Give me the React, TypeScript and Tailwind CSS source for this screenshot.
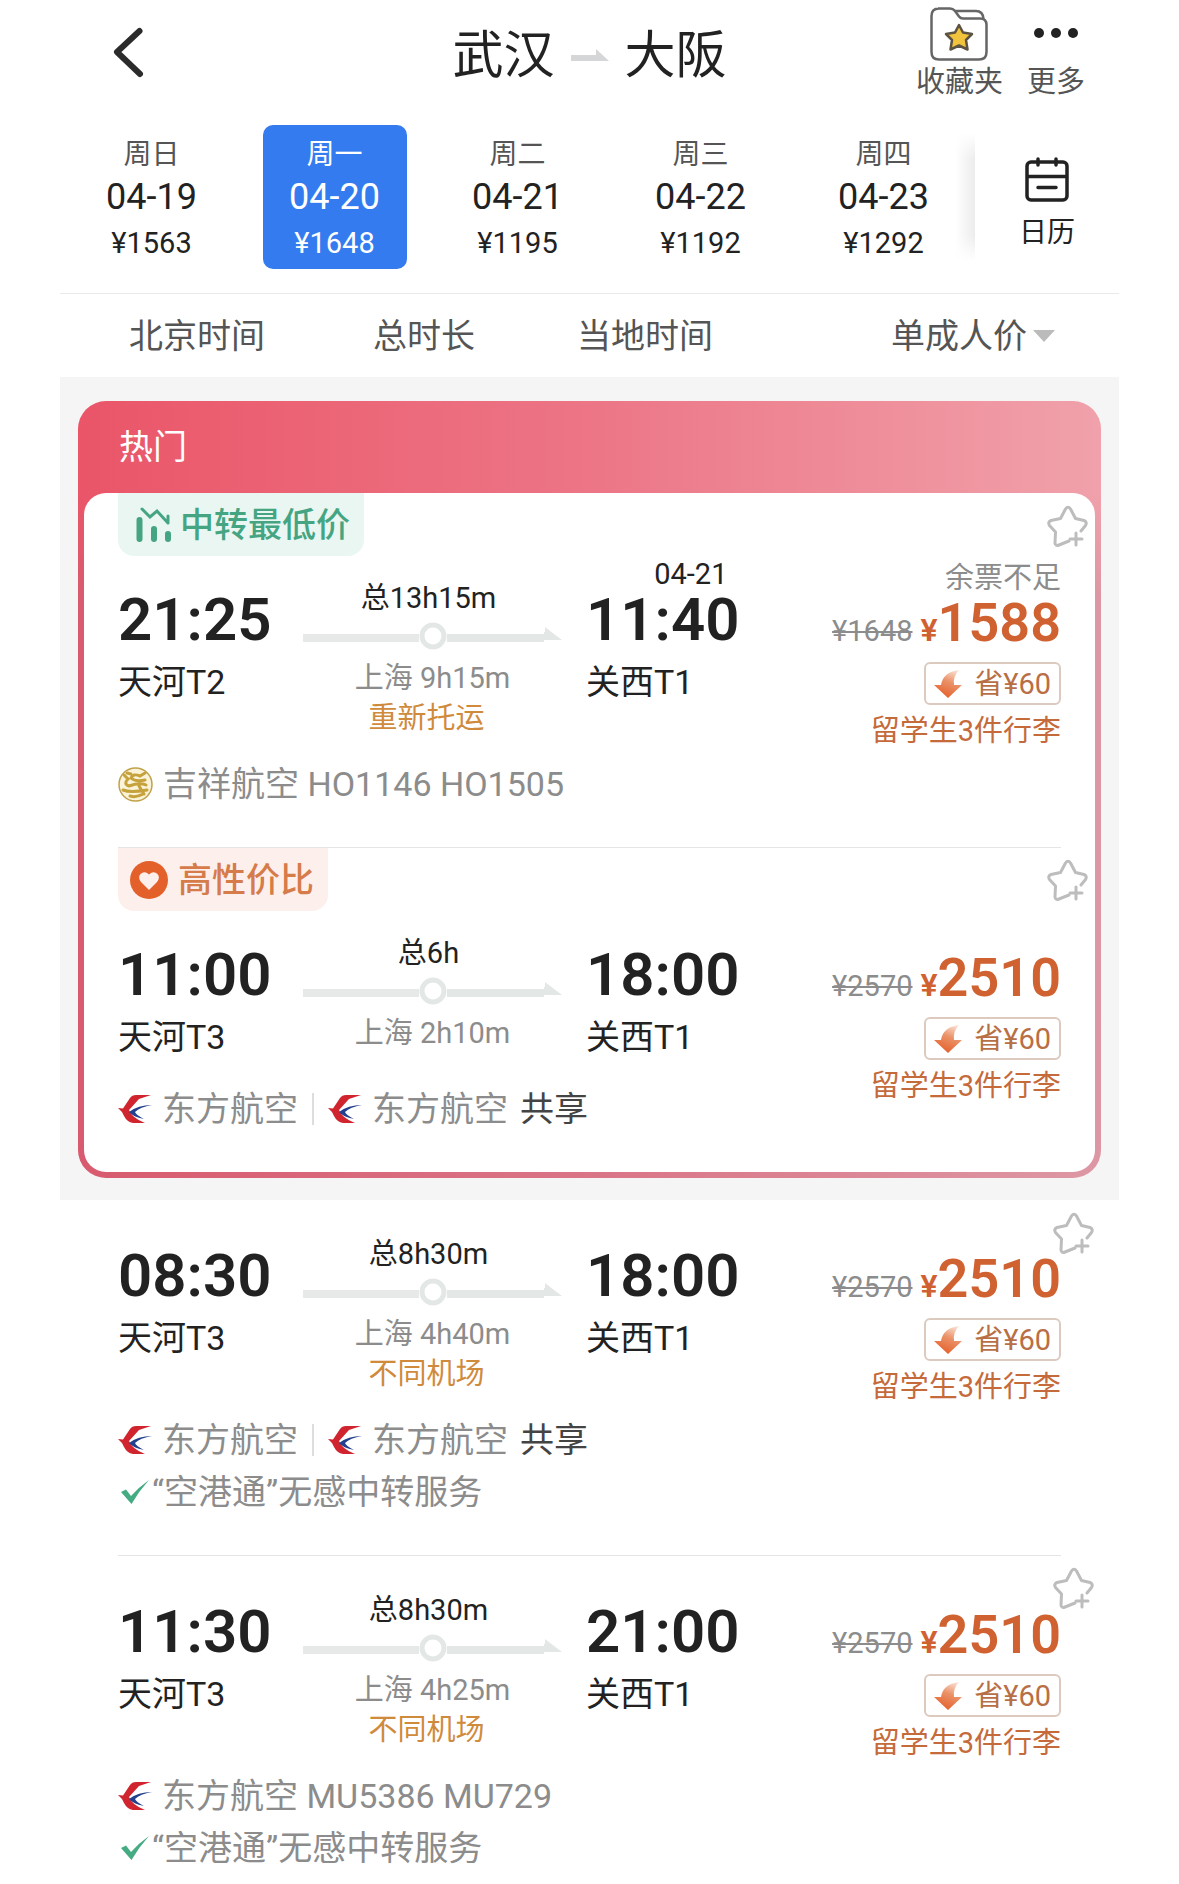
// Flight search results: date strip, sort bar, highlighted picks and the plain list.

import { useState } from "react";

type Leg = { airline: "juneyao" | "eastern"; name: string; shared?: boolean };

type Flight = {
  depart: string;
  from: string;
  arrive: string;
  arriveDate?: string;
  to: string;
  total: string;
  stop: string;
  notice?: string;
  oldPrice: string;
  price: string;
  lowStock?: boolean;
  legs: Leg[];
  service?: string;
  tag?: "cheapest" | "value";
};

const DAYS = [
  { week: "周日", date: "04-19", price: "¥1563" },
  { week: "周一", date: "04-20", price: "¥1648" },
  { week: "周二", date: "04-21", price: "¥1195" },
  { week: "周三", date: "04-22", price: "¥1192" },
  { week: "周四", date: "04-23", price: "¥1292" },
];

const EASTERN_SHARED: Leg[] = [
  { airline: "eastern", name: "东方航空" },
  { airline: "eastern", name: "东方航空", shared: true },
];

const HOT: Flight[] = [
  {
    depart: "21:25",
    from: "天河T2",
    arrive: "11:40",
    arriveDate: "04-21",
    to: "关西T1",
    total: "总13h15m",
    stop: "上海 9h15m",
    notice: "重新托运",
    oldPrice: "¥1648",
    price: "1588",
    lowStock: true,
    legs: [{ airline: "juneyao", name: "吉祥航空 HO1146 HO1505" }],
    tag: "cheapest",
  },
  {
    depart: "11:00",
    from: "天河T3",
    arrive: "18:00",
    to: "关西T1",
    total: "总6h",
    stop: "上海 2h10m",
    oldPrice: "¥2570",
    price: "2510",
    legs: EASTERN_SHARED,
    tag: "value",
  },
];

const REST: Flight[] = [
  {
    depart: "08:30",
    from: "天河T3",
    arrive: "18:00",
    to: "关西T1",
    total: "总8h30m",
    stop: "上海 4h40m",
    notice: "不同机场",
    oldPrice: "¥2570",
    price: "2510",
    legs: EASTERN_SHARED,
    service: "“空港通”无感中转服务",
  },
  {
    depart: "11:30",
    from: "天河T3",
    arrive: "21:00",
    to: "关西T1",
    total: "总8h30m",
    stop: "上海 4h25m",
    notice: "不同机场",
    oldPrice: "¥2570",
    price: "2510",
    legs: [{ airline: "eastern", name: "东方航空 MU5386 MU729" }],
    service: "“空港通”无感中转服务",
  },
];

export default function App() {
  const [day, setDay] = useState("04-20");

  return (
    <div className="min-h-screen bg-white px-[60px] font-[Roboto,'Noto_Sans_CJK_SC',sans-serif] text-[#222]">
      {/* -- Title bar ---------------------------------------------------- */}
      <header className="grid h-[125px] grid-cols-[1fr_auto_1fr] items-start">
        <button aria-label="返回" className="mt-6 ml-[51px] w-fit">
          <svg width="34" height="56" viewBox="0 0 34 56" fill="none" stroke="#2b2b2b" strokeWidth="6" strokeLinecap="round" strokeLinejoin="round">
            <path d="M28.500 7L6 28L29 50" />
          </svg>
        </button>
        <h1 className="mt-6 flex items-center gap-4 text-[51px] leading-[64px]">
          <span>武汉</span>
          <svg width="38" height="14" viewBox="0 0 38 14" fill="#d5d6d8">
            <path d="M0 6H25V0L38 12H0Z" />
          </svg>
          <span>大阪</span>
        </h1>
        <nav className="flex justify-end gap-6 pt-1.5 pr-[34px] text-[29px] leading-10 text-[#555]">
          <button className="flex flex-col items-center">
            <span className="flex h-14 items-center">
              <FolderIcon />
            </span>
            收藏夹
          </button>
          <button className="flex flex-col items-center">
            <span className="flex h-14 items-center">
              <svg width="46" height="12" viewBox="0 0 46 12" fill="#222">
                <circle cx="6" cy="5" r="5" />
                <circle cx="23" cy="5" r="5" />
                <circle cx="40" cy="5" r="5" />
              </svg>
            </span>
            更多
          </button>
        </nav>
      </header>

      {/* -- Date strip --------------------------------------------------- */}
      <div className="flex pb-6">
        <div className="relative grid flex-1 grid-cols-5 justify-items-center">
          {DAYS.map((d) => (
            <button
              key={d.date}
              onClick={() => setDay(d.date)}
              className={
                d.date === day
                  ? "flex h-36 w-36 flex-col items-center rounded-[10px] bg-[#347bf0] pt-3 text-white"
                  : "flex h-36 w-36 flex-col items-center pt-3"
              }
            >
              <span className={d.date === day ? "text-[28px] leading-9" : "text-[28px] leading-9 text-[#555]"}>{d.week}</span>
              <span className="text-4xl leading-12">{d.date}</span>
              <span className="text-[29px] leading-11">{d.price}</span>
            </button>
          ))}
          <div className="absolute inset-y-2 right-0 w-5 bg-linear-to-r from-transparent to-[#ececec] mask-y-from-80%" />
        </div>
        <button className="flex w-36 flex-col items-center pt-8 text-[28px] leading-9">
          <svg width="44" height="46" viewBox="0 0 44 46" fill="none" stroke="#222" strokeWidth="3.500" strokeLinecap="round">
            <rect x="2" y="5" width="40" height="38" rx="4" />
            <path d="M3 19.500H41M13 30.500H31M13 2V8M31 2V8" />
          </svg>
          <span className="mt-3">日历</span>
        </button>
      </div>

      {/* -- Sort bar ----------------------------------------------------- */}
      <div className="grid h-[84px] grid-cols-[244px_204px_1fr_auto] items-center justify-items-start border-t border-[#eaeaea] pr-16 pl-[69px] text-[34px] leading-11 text-[#555]">
        <button>北京时间</button>
        <button>总时长</button>
        <button>当地时间</button>
        <button className="flex items-center gap-1.5">
          单成人价
          <svg width="22" height="12" viewBox="0 0 22 12" fill="#bbb">
            <path d="M0 0H22L11 12Z" />
          </svg>
        </button>
      </div>

      {/* -- Highlighted picks -------------------------------------------- */}
      <section className="bg-[#f5f5f5] px-[18px] pt-6 pb-[22px]">
        <div className="overflow-hidden rounded-[28px] bg-linear-to-r from-[#ea5568] via-[#ec7586] to-[#f0a1ab]">
          <h2 className="px-[41px] py-6 text-[34px] leading-11 text-white">热门</h2>
          <div className="bg-linear-to-b from-transparent to-[#907088]/20 to-15% px-1.5 pb-1.5">
            <div className="overflow-hidden rounded-[22px] bg-white">
              {HOT.map((f, i) => (
                <FlightRow key={i} flight={f} divided={i > 0} inset />
              ))}
            </div>
          </div>
        </div>
      </section>

      <section>
        {REST.map((f, i) => (
          <FlightRow key={i} flight={f} divided={i > 0} />
        ))}
      </section>
    </div>
  );
}

/* -- One result ------------------------------------------------------- */
function FlightRow({ flight, divided, inset }: { flight: Flight; divided: boolean; inset?: boolean }) {
  return (
    <article className={inset ? "relative px-[34px]" : "relative px-[58px]"}>
      {divided && <hr className="border-[#e5e5e5]" />}
      {flight.tag && <Tag kind={flight.tag} />}
      <button aria-label="收藏航班" className={inset ? "absolute top-3 right-1.5" : "absolute top-3 right-6"}>
        <StarPlus />
      </button>

      <div className="flex pt-4 pb-[37px]">
        <div className="min-w-0 flex-1">
          <div className="grid grid-cols-[185px_1fr_250px]">
            <div className="pt-7 pb-1">
              <div className="text-[60px] leading-16 font-semibold">{flight.depart}</div>
              <div className="mt-2 text-[34px] leading-11">{flight.from}</div>
            </div>
            <div className="pt-[22px] pr-6 text-center text-[29px]">
              <div className="pr-2 leading-8">{flight.total}</div>
              <RouteLine />
              <div className="mt-2 leading-10 text-[#8c8c8c]">{flight.stop}</div>
              {flight.notice && <div className="pr-3 leading-10 text-[#d08a3c]">{flight.notice}</div>}
            </div>
            <div className="w-fit">
              <div className="h-7 pr-3 text-right text-[29px] leading-7">{flight.arriveDate}</div>
              <div className="text-[60px] leading-16 font-semibold">{flight.arrive}</div>
              <div className="mt-2 text-[34px] leading-11">{flight.to}</div>
            </div>
          </div>

          <div className="mt-5 text-[34px] leading-[52px] text-[#8c8c8c]">
            <div className="flex items-center">
              {flight.legs.map((leg, i) => (
                <div key={i} className="flex items-center">
                  {i > 0 && <span className="mx-3.5 h-8 w-0.5 bg-[#ddd]" />}
                  {leg.airline === "eastern" ? <EasternLogo /> : <JuneyaoLogo />}
                  <span className="ml-2.5">{leg.name}</span>
                  {leg.shared && <span className="ml-3 text-[#444]">共享</span>}
                </div>
              ))}
            </div>
            {flight.service && (
              <div className="flex items-center">
                <svg className="mr-0.5 ml-0.5" width="30" height="26" viewBox="0 0 30 26" fill="#45ab83">
                  <path d="M1 13L6 10.500L11 17Q19 8 29 1Q19 12 11.500 25Z" />
                </svg>
                {flight.service}
              </div>
            )}
          </div>
        </div>

        <div className="flex w-[225px] flex-col items-end pt-1 text-[29px]">
          <div className="h-7 leading-7 text-[#8c8c8c]">{flight.lowStock && "余票不足"}</div>
          <div className="flex h-[62px] items-baseline gap-2 whitespace-nowrap">
            <s className="text-[29px] text-[#8c8c8c]">{flight.oldPrice}</s>
            <span className="text-[54px] leading-[62px] font-semibold text-[#d06130]">
              <span className="text-[32px]">¥</span>
              {flight.price}
            </span>
          </div>
          <div className="mt-2 flex h-[43px] items-center gap-3 rounded-md border-2 border-[#dccabf] px-2 leading-9 text-[#b96f45]">
            <SaveArrow />
            省¥60
          </div>
          <div className="mt-1.5 leading-10 whitespace-nowrap text-[#c56a3a]">留学生3件行李</div>
        </div>
      </div>
    </article>
  );
}

function Tag({ kind }: { kind: "cheapest" | "value" }) {
  const base = "-mb-3 flex h-[63px] w-fit items-center rounded-b-2xl text-[34px] leading-11 font-medium";
  if (kind === "cheapest") {
    return (
      <div className={`${base} bg-[#eaf6f1] pr-3.5 pl-[18px] text-[#45a583]`}>
        <svg className="mr-2" width="36" height="36" viewBox="0 0 36 36" fill="none" stroke="currentColor" strokeLinecap="round">
          <path strokeWidth="6" d="M3.500 13V32M18 22V32M32 27V32" />
          <path strokeWidth="3" d="M6 2L14 10L21 4L32 16M32 9V16" />
        </svg>
        中转最低价
      </div>
    );
  }
  return (
    <div className={`${base} bg-[#fdf0ec] pr-3.5 pl-3 text-[#d67b4a]`}>
      <svg className="mr-2.5" width="38" height="38" viewBox="0 0 38 38">
        <circle cx="19" cy="19" r="19" fill="#e3602a" />
        <path fill="#fdf0ec" d="M19 29L11 21Q7.500 16.500 10.500 13Q14.500 9.500 19 13.500Q23.500 9.500 27.500 13Q30.500 16.500 27 21Z" />
      </svg>
      高性价比
    </div>
  );
}

/* Departure to arrival, with the stopover ring in the middle */
function RouteLine() {
  return (
    <div className="mt-2 flex h-7 items-center">
      <div className="mt-1 h-2 flex-1 bg-[#e6e9e8]" />
      <svg width="28" height="28" viewBox="0 0 28 28">
        <circle cx="14" cy="14" r="11" fill="#fff" stroke="#e3e7e6" strokeWidth="5" />
      </svg>
      <div className="flex flex-1 items-center">
        <div className="mt-1 h-2 flex-1 bg-[#e3e8e6]" />
        <svg className="-mt-1" width="18" height="14" viewBox="0 0 18 14" fill="#e3e8e6">
          <path d="M0 5H1V0L18 13H0Z" />
        </svg>
      </div>
    </div>
  );
}

function StarPlus() {
  return (
    <svg width="42" height="42" viewBox="0 0 42 42" fill="none" stroke="#bdbdbd" strokeWidth="3" strokeLinecap="round" strokeLinejoin="round">
      <path d="M34 26L38.500 20.500Q40.500 17 37 15.500L28.500 13.500L23.500 4Q21 0.500 18.500 4L13.500 13.500L4 15.500Q0.500 17 2.500 20.500L8.500 27L8 38Q8.500 41.500 12 40L22 36" />
      <path d="M29 28V40M23 34H35" />
    </svg>
  );
}

function SaveArrow() {
  return (
    <svg width="28" height="28" viewBox="0 0 28 28">
      <defs>
        <linearGradient id="save" x1="0.800" y1="0" x2="0.400" y2="1">
          <stop offset="0" stopColor="#fbe3d7" />
          <stop offset="0.450" stopColor="#ea9268" />
          <stop offset="1" stopColor="#e5602c" />
        </linearGradient>
      </defs>
      <path fill="url(#save)" d="M7 15Q9 2 25 0Q19 6 20 15H28L14 28L0 15Z" />
    </svg>
  );
}

function FolderIcon() {
  return (
    <svg width="58" height="54" viewBox="0 0 58 54" fill="none" stroke="#666" strokeWidth="2.500" strokeLinejoin="round">
      <path d="M8 1.500H20Q23 1.500 25 4L29 9.500Q30.500 11.500 33 11.500H50Q56.500 11.500 56.500 18V45Q56.500 52.500 49 52.500H9Q1.500 52.500 1.500 45V9Q1.500 1.500 9 1.500" />
      <path d="M25 4H46Q53 4 53.500 12" />
      <path fill="#f2c33c" stroke="#5c5343" d="M29 18L33 25.500L42 27L36 33L37.500 42.500L29 38.500L20.500 42.500L22 33L16 27L25 25.500Z" />
    </svg>
  );
}

function EasternLogo() {
  return (
    <svg width="34" height="28" viewBox="0 0 34 28">
      <path fill="#d0242f" d="M0 13L5 13.500L12 3Q14 0 18 0H33L21 4L11 15Q14 23 27 28H15Q9 27 6 21Q4 16 0 13Z" />
      <path fill="#23408e" d="M34 10Q20 10 11 17Q15 22 26 24Q18 20 17 17Q22 12 34 10Z" />
    </svg>
  );
}

function JuneyaoLogo() {
  return (
    <svg width="35" height="35" viewBox="0 0 35 35" fill="none" strokeLinecap="round">
      <circle cx="17.500" cy="17.500" r="16.500" fill="#faf3d8" stroke="#bfa24c" strokeWidth="1.500" />
      <path stroke="#c6a23c" strokeWidth="3" d="M27 6L22 9Q15 6 13 11Q17 15 27 13M6 8L10 12Q5 17 11 19Q22 15 28 18M5 23Q12 26 29 23M12 29Q18 31 25 27M9 6L13 7M21 19L26 27" />
    </svg>
  );
}
